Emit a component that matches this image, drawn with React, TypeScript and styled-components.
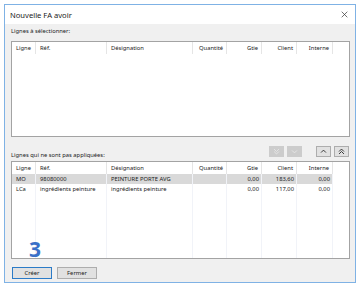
import styled, { createGlobalStyle } from "styled-components";

const GlobalStyle = createGlobalStyle`
  html, body {
    margin: 0;
    padding: 0;
    background: #ffffff;
  }
  body {
    font-family: "Noto Sans", "Open Sans", sans-serif;
    color: #1a1a1a;
  }
`;

const COLS = "24px 71px 86px 34px 35px 35px 36px 1fr";

const Page = styled.div`
  width: 360px;
  height: 289px;
  padding: 4px 0 0 4px;
  box-sizing: border-box;
`;

const Window = styled.div`
  width: 352px;
  height: 279px;
  box-sizing: border-box;
  border: 1px solid #7fb2e5;
  background: #f0f0f0;
  display: flex;
  flex-direction: column;
`;

const TitleBar = styled.div`
  height: 19px;
  background: #ffffff;
  display: flex;
  align-items: center;
  justify-content: space-between;
  padding: 0 7px 0 5px;
  font-size: 7.6px;
  color: #1a1a1a;
`;

const Body = styled.div`
  flex: 1;
  display: flex;
  flex-direction: column;
  padding: 3px 5px 0 6px;
`;

const Label = styled.div`
  font-size: 5.8px;
  line-height: 9px;
  height: 9px;
  margin-bottom: 5px;
`;

const ListBox = styled.div<{ $h: number }>`
  position: relative;
  height: ${(p) => p.$h}px;
  box-sizing: border-box;
  border: 1px solid #a3a3a3;
  background: #ffffff;
`;

const Row = styled.div<{ $selected?: boolean }>`
  display: grid;
  grid-template-columns: ${COLS};
  height: 10px;
  font-size: 5.8px;
  line-height: 10px;
  & > span {
    background: ${(p) => (p.$selected ? "#d9d9d9" : "transparent")};
  }
  & > span:last-child {
    background: transparent;
  }
`;

const HeaderRow = styled(Row)`
  height: 12px;
  line-height: 12px;
  & > span {
    border-right: 1px solid #e5e5e5;
  }
  & > span:last-child {
    border-right: none;
  }
`;

const Cell = styled.span<{ $right?: boolean }>`
  padding: 0 3px 0 4px;
  text-align: ${(p) => (p.$right ? "right" : "left")};
  white-space: nowrap;
  overflow: hidden;
`;

const GridLines = styled.div`
  position: absolute;
  left: 0;
  right: 0;
  top: 12px;
  bottom: 0;
  display: grid;
  grid-template-columns: ${COLS};
  pointer-events: none;
  & > i {
    border-right: 1px solid #f1f3f8;
  }
  & > i:last-child {
    border-right: none;
  }
`;

const Toolbar = styled.div`
  display: flex;
  align-items: flex-end;
  justify-content: space-between;
  margin-top: 6px;
  height: 18px;
`;

const ToolLabel = styled(Label)`
  margin-bottom: 1px;
`;

const ArrowGroup = styled.div`
  display: flex;
  gap: 3px;
  align-self: flex-start;
  margin-top: 3px;
  margin-right: 1px;
`;

const ArrowPair = styled.div`
  display: flex;
  gap: 3px;
  margin-left: 11px;
  &:first-child {
    margin-left: 0;
  }
`;

const ArrowButton = styled.div<{ $disabled?: boolean }>`
  width: 15px;
  height: 11px;
  box-sizing: border-box;
  display: flex;
  align-items: center;
  justify-content: center;
  background: ${(p) => (p.$disabled ? "#cccccc" : "#e1e1e1")};
  border: 1px solid ${(p) => (p.$disabled ? "#cccccc" : "#adadad")};
  color: ${(p) => (p.$disabled ? "#e8e8e8" : "#1a1a1a")};
`;

const Marker = styled.div`
  position: absolute;
  left: 17px;
  bottom: -4px;
  font-family: "Open Sans", "Noto Sans", sans-serif;
  font-weight: 700;
  font-size: 21px;
  color: #3a70c8;
  line-height: 1.2;
`;

const Footer = styled.div`
  display: flex;
  gap: 5px;
  margin-top: 8px;
  margin-left: 1px;
`;

const Button = styled.div<{ $primary?: boolean }>`
  width: 40px;
  height: 12px;
  box-sizing: border-box;
  display: flex;
  align-items: center;
  justify-content: center;
  font-size: 5.8px;
  background: #e1e1e1;
  border: 1px solid ${(p) => (p.$primary ? "#2b7bc7" : "#adadad")};
`;

type Line = {
  ligne: string;
  ref: string;
  designation: string;
  quantite: string;
  gtie: string;
  client: string;
  interne: string;
  selected?: boolean;
};

const lines: Line[] = [
  {
    ligne: "MO",
    ref: "98080000",
    designation: "PEINTURE PORTE AVG",
    quantite: "",
    gtie: "0,00",
    client: "183,60",
    interne: "0,00",
    selected: true,
  },
  {
    ligne: "LCa",
    ref: "ingrédients peinture",
    designation: "ingrédients peinture",
    quantite: "",
    gtie: "0,00",
    client: "117,00",
    interne: "0,00",
  },
];

const Header = () => (
  <HeaderRow>
    <Cell>Ligne</Cell>
    <Cell>Réf.</Cell>
    <Cell>Désignation</Cell>
    <Cell $right>Quantité</Cell>
    <Cell $right>Gtie</Cell>
    <Cell $right>Client</Cell>
    <Cell $right>Interne</Cell>
    <Cell />
  </HeaderRow>
);

const Chevron = ({ up, double }: { up?: boolean; double?: boolean }) => (
  <svg width="7" height="7" viewBox="0 0 10 10" fill="none" stroke="currentColor" strokeWidth="1.2">
    {double ? (
      up ? (
        <>
          <path d="M1.5 5 L5 1.5 L8.5 5" />
          <path d="M1.5 8.5 L5 5 L8.5 8.5" />
        </>
      ) : (
        <>
          <path d="M1.5 1.5 L5 5 L8.5 1.5" />
          <path d="M1.5 5 L5 8.5 L8.5 5" />
        </>
      )
    ) : up ? (
      <path d="M1.5 6.5 L5 3 L8.5 6.5" />
    ) : (
      <path d="M1.5 3.5 L5 7 L8.5 3.5" />
    )}
  </svg>
);

const CloseIcon = () => (
  <svg width="7" height="7" viewBox="0 0 10 10" stroke="#333" strokeWidth="1">
    <path d="M1 1 L9 9 M9 1 L1 9" />
  </svg>
);

export default function App() {
  return (
    <>
      <GlobalStyle />
      <Page>
        <Window>
          <TitleBar>
            <span>Nouvelle FA avoir</span>
            <CloseIcon />
          </TitleBar>
          <Body>
            <Label>Lignes à sélectionner:</Label>
            <ListBox $h={96}>
              <Header />
            </ListBox>
            <Toolbar>
              <ToolLabel>Lignes qui ne sont pas appliquées:</ToolLabel>
              <ArrowGroup>
                <ArrowPair>
                  <ArrowButton $disabled>
                    <Chevron double />
                  </ArrowButton>
                  <ArrowButton $disabled>
                    <Chevron />
                  </ArrowButton>
                </ArrowPair>
                <ArrowPair>
                  <ArrowButton>
                    <Chevron up />
                  </ArrowButton>
                  <ArrowButton>
                    <Chevron up double />
                  </ArrowButton>
                </ArrowPair>
              </ArrowGroup>
            </Toolbar>
            <ListBox $h={98}>
              <GridLines>
                {Array.from({ length: 8 }).map((_, i) => (
                  <i key={i} />
                ))}
              </GridLines>
              <Header />
              {lines.map((l) => (
                <Row key={l.ligne} $selected={l.selected}>
                  <Cell>{l.ligne}</Cell>
                  <Cell>{l.ref}</Cell>
                  <Cell>{l.designation}</Cell>
                  <Cell $right>{l.quantite}</Cell>
                  <Cell $right>{l.gtie}</Cell>
                  <Cell $right>{l.client}</Cell>
                  <Cell $right>{l.interne}</Cell>
                  <Cell />
                </Row>
              ))}
              <Marker>3</Marker>
            </ListBox>
            <Footer>
              <Button $primary>Créer</Button>
              <Button>Fermer</Button>
            </Footer>
          </Body>
        </Window>
      </Page>
    </>
  );
}
